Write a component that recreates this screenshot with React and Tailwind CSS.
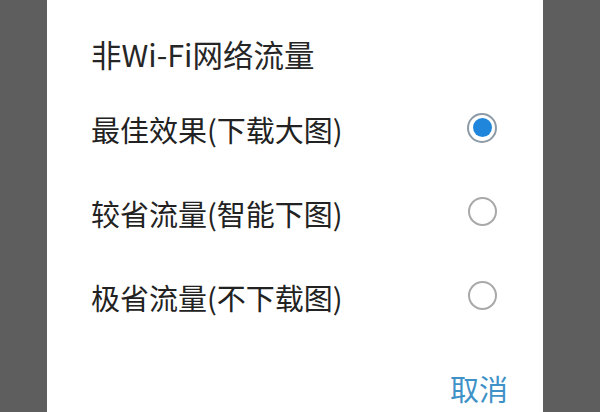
import React from "react";

const options = [
  { label: "最佳效果(下载大图)", checked: true },
  { label: "较省流量(智能下图)", checked: false },
  { label: "极省流量(不下载图)", checked: false },
];

function Radio({ checked }) {
  if (checked) {
    return (
      <div className="w-[30px] h-[30px] rounded-full border-[2px] border-[#8d9aa6] flex items-center justify-center">
        <div className="w-[19px] h-[19px] rounded-full bg-[#1f86dc]" />
      </div>
    );
  }
  return <div className="w-[29px] h-[29px] rounded-full border-[2px] border-[#a9a9a9]" />;
}

export default function App() {
  return (
    <div
      className="w-[600px] h-[412px] bg-[#5e5e5e] flex pl-[47px] overflow-hidden"
      style={{ fontFamily: '"Noto Sans CJK SC", "Noto Sans", sans-serif' }}
    >
      <div className="w-[496px] h-full bg-white flex flex-col pl-[44px] pr-[45px] pt-[34px]">
        <div className="text-[30.5px] leading-[40px] text-[#262626]">非Wi-Fi网络流量</div>
        <div className="flex flex-col mt-[13px]">
          {options.map((o) => (
            <div key={o.label} className="h-[84px] flex items-center justify-between">
              <span className="text-[29px] leading-[40px] text-[#222222]">{o.label}</span>
              <div className="w-[32px] flex justify-center mt-[-3px]">
                <Radio checked={o.checked} />
              </div>
            </div>
          ))}
        </div>
        <div className="flex justify-end mt-[29px]">
          <span className="text-[29px] leading-[40px] text-[#3f92c8] mr-[-10px]">取消</span>
        </div>
      </div>
    </div>
  );
}
